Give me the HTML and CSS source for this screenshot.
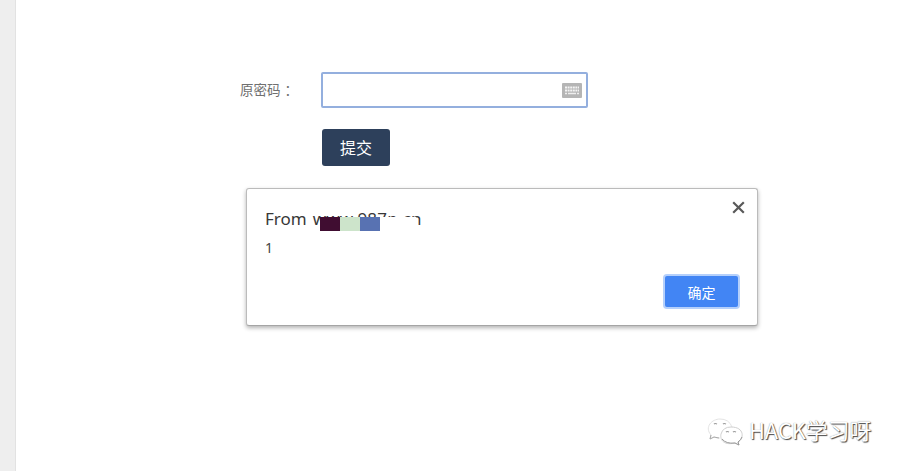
FILE: index.html
```html
<!DOCTYPE html>
<html lang="zh-CN">
<head>
<meta charset="utf-8">
<title>原密码</title>
<link rel="stylesheet" href="styles.css">
</head>
<body>
<aside class="sidebar"></aside>
<main class="content">
  <form class="form">
    <label class="label" for="pwd">原密码<span class="colon">：</span></label>
    <div class="field">
      <input class="input" id="pwd" type="password">
      <svg class="keyboard" width="20" height="15" viewBox="0 0 20 15"><rect width="20" height="15" rx="1" fill="#b5b5b5"/><path d="M3 4.5h14M3 7.5h14" stroke="#f4f4f4" stroke-width="2" stroke-dasharray="2 .6"/><path d="M3 10.5h2M6 10.5h8M15 10.5h2" stroke="#eee" stroke-width="1.6"/></svg>
    </div>
    <button class="submit" type="button">提交</button>
  </form>
</main>
<section class="dialog" role="dialog">
  <div class="dialog-head">
    <div class="title"><span class="from">From</span><span class="host">www.987p.cn</span>
      <div class="mosaic"><i class="plum"></i><i class="mint"></i><i class="blue"></i><i class="blank"></i></div>
    </div>
    <svg class="close" width="13" height="13" viewBox="0 0 13 13"><path d="M1.2 1.2l10.6 10.6M11.8 1.2L1.2 11.8" stroke="#595959" stroke-width="2.2"/></svg>
  </div>
  <p class="message">1</p>
  <button class="confirm" type="button">确定</button>
</section>
<div class="watermark">
  <svg class="wechat" width="36" height="28" viewBox="0 0 36 28" fill="none">
    <path d="M13 20q-3 .5-6-1l-4 2 1-4C-3 9 5 1 13 1q9 0 12 8" stroke="#e4e4e4"/>
    <path d="M4 17l-1 4 4-2 5 1" stroke="#aaa"/>
    <path d="M24 9c14 0 13 12 7 15l1 3-4-2C15 28 13 20 14 16q2-7 10-7" fill="#fff" stroke="#d0d0d0"/>
    <path d="M15 21q4 5 13 4l4 2-1-3q3-2 4-5" stroke="#999"/>
    <path d="M7 6q1-1 3 0M16 6q1-1 3 0M19 14q1-1 3 0M26 14q1-1 3 0" stroke="#999" stroke-width="1.2"/>
  </svg>
  <span class="brand">HACK学习呀</span>
</div>
</body>
</html>
```
FILE: styles.css
```css
* { box-sizing: border-box; }
body {
  margin: 0;
  height: 471px;
  display: flex;
  overflow: hidden;
  background: #fff;
  font-family: "Noto Sans", "Noto Sans CJK SC", sans-serif;
}
button { border: 0; padding: 0; font-family: inherit; }
.sidebar {
  width: 16px;
  background: #eee;
  border-right: 1px solid #e2e2e2;
}
.content { flex: 1; padding: 72px 0 0 224px; }
.form {
  display: grid;
  grid-template-columns: 81px 267px;
  grid-template-rows: 36px 37px;
  row-gap: 21px;
}
.label {
  align-self: center;
  margin-top: -2px;
  font: 13.5px "Noto Sans CJK SC", sans-serif;
  color: #707070;
}
.colon { margin-left: 4px; }
.field { position: relative; }
.input {
  display: block;
  width: 100%;
  height: 36px;
  border: 2px solid #94afde;
  border-radius: 2px;
  outline: 0;
}
.keyboard { position: absolute; right: 6px; top: 11px; }
.submit {
  grid-column: 2;
  width: 68px;
  margin-left: 1px;
  padding-bottom: 2px;
  border-radius: 3px;
  background: #2d405b;
  color: #fff;
  font-size: 16px;
}
.dialog {
  position: absolute;
  left: 246px;
  top: 188px;
  width: 512px;
  height: 138px;
  padding: 14px 18px 18px;
  display: flex;
  flex-direction: column;
  border: 1px solid #bbb;
  border-bottom-color: #a5a5a5;
  border-radius: 3px;
  background: #fff;
  box-shadow: 0 2px 4px rgba(0, 0, 0, .3);
}
.dialog-head { display: flex; justify-content: space-between; }
.title {
  position: relative;
  height: 32px;
  line-height: 32px;
  font-size: 17px;
  color: #383838;
  white-space: nowrap;
}
.host { margin-left: 6px; letter-spacing: .2px; }
.mosaic { position: absolute; left: 55px; top: 14px; display: flex; height: 14px; }
.mosaic i { width: 20px; }
.mosaic .plum { background: #400d31; }
.mosaic .mint { background: #cde4cb; }
.mosaic .blue { background: #5872b2; }
.mosaic .blank { width: 36px; background: #fff; }
.close { margin: -2px -6px 0 0; align-self: flex-start; }
.message {
  margin: 3px 0 0;
  line-height: 20px;
  font-size: 14px;
  color: #444;
}
.confirm {
  width: 73px;
  height: 31px;
  margin-top: auto;
  margin-right: 1px;
  align-self: flex-end;
  border-radius: 2px;
  background: #4285f4;
  box-shadow: 0 0 0 2px #b5d0fb;
  color: #fff;
  font-size: 14px;
}
.watermark {
  position: absolute;
  left: 707px;
  top: 416px;
  display: flex;
  align-items: center;
  height: 32px;
}
.brand {
  margin: -4px 0 0 6px;
  font: 21.8px/32px "Noto Sans CJK SC", sans-serif;
  color: #fff;
  text-shadow: 1px 1px 1px #444, 0 0 1px #888;
  white-space: nowrap;
}
```
